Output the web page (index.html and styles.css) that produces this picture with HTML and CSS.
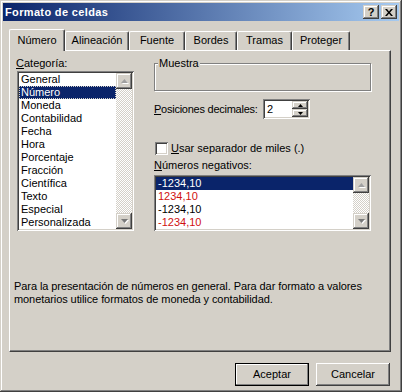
FILE: index.html
```html
<!DOCTYPE html>
<html lang="es">
<head>
    <meta charset="UTF-8">
    <meta name="viewport" content="width=device-width, initial-scale=1.0">
    <title>Formato de celdas</title>
    <link rel="stylesheet" href="styles.css">
</head>
<body>

<div class="window">
    <div class="titlebar">
        <span class="title">Formato de celdas</span>
        <div class="caption-buttons">
            <span class="cap-btn">?</span>
            <span class="cap-btn">
                <svg width="8" height="7" viewBox="0 0 8 7"><path d="M0 0h2l2 2.4L6 0h2L5 3.5 8 7H6L4 4.6 2 7H0l3-3.5z"/></svg>
            </span>
        </div>
    </div>

    <div class="dialog">
        <div class="tabs">
            <div class="tab tab-active tab-numero">Número</div>
            <div class="tab tab-alineacion">Alineación</div>
            <div class="tab tab-fuente">Fuente</div>
            <div class="tab tab-bordes">Bordes</div>
            <div class="tab tab-tramas">Tramas</div>
            <div class="tab tab-proteger">Proteger</div>
        </div>

        <div class="panel">
            <div class="panel-grid">
                <div class="col-left">
                    <div class="label"><u>C</u>ategoría:</div>
                    <div class="listbox list-cat">
                        <div class="items">
                            <div class="item">General</div>
                            <div class="item item-selected item-focus">Número</div>
                            <div class="item">Moneda</div>
                            <div class="item">Contabilidad</div>
                            <div class="item">Fecha</div>
                            <div class="item">Hora</div>
                            <div class="item">Porcentaje</div>
                            <div class="item">Fracción</div>
                            <div class="item">Científica</div>
                            <div class="item">Texto</div>
                            <div class="item">Especial</div>
                            <div class="item">Personalizada</div>
                        </div>
                        <div class="scrollbar">
                            <div class="scroll-btn arrow-up">
                                <svg width="7" height="4" viewBox="0 0 7 4"><path d="M3.5 0L7 4H0z"/></svg>
                            </div>
                            <div class="scroll-track"></div>
                            <div class="scroll-btn arrow-down">
                                <svg width="7" height="4" viewBox="0 0 7 4"><path d="M0 0h7L3.5 4z"/></svg>
                            </div>
                        </div>
                    </div>
                </div>

                <div class="col-right">
                    <div class="group">
                        <div class="group-label">Muestra</div>
                    </div>

                    <div class="decimals-row">
                        <span class="label decimals-label"><u>P</u>osiciones decimales:</span>
                        <div class="spin">
                            <span class="spin-value">2</span>
                            <div class="spin-buttons">
                                <div class="spin-btn">
                                    <svg width="5" height="3" viewBox="0 0 5 3"><path d="M2.5 0L5 3H0z"/></svg>
                                </div>
                                <div class="spin-btn">
                                    <svg width="5" height="3" viewBox="0 0 5 3"><path d="M0 0h5L2.5 3z"/></svg>
                                </div>
                            </div>
                        </div>
                    </div>

                    <div class="check-row">
                        <span class="checkbox"></span>
                        <span class="label"><u>U</u>sar separador de miles (.)</span>
                    </div>

                    <div class="label neg-label"><u>N</u>úmeros negativos:</div>
                    <div class="listbox list-neg">
                        <div class="items">
                            <div class="item item-selected">-1234,10</div>
                            <div class="item item-red">1234,10</div>
                            <div class="item">-1234,10</div>
                            <div class="item item-red">-1234,10</div>
                        </div>
                        <div class="scrollbar">
                            <div class="scroll-btn arrow-up">
                                <svg width="7" height="4" viewBox="0 0 7 4"><path d="M3.5 0L7 4H0z"/></svg>
                            </div>
                            <div class="scroll-track"></div>
                            <div class="scroll-btn arrow-down">
                                <svg width="7" height="4" viewBox="0 0 7 4"><path d="M0 0h7L3.5 4z"/></svg>
                            </div>
                        </div>
                    </div>
                </div>
            </div>

            <p class="desc">Para la presentación de números en general. Para dar formato a valores monetarios utilice formatos de moneda y contabilidad.</p>
        </div>

        <div class="footer">
            <div class="btn btn-default">Aceptar</div>
            <div class="btn">Cancelar</div>
        </div>
    </div>
</div>

</body>
</html>
```

FILE: styles.css
```css
body {
    margin: 0;
    background: #d4d0c8;
    font-family: "Liberation Sans", Arial, sans-serif;
    font-size: 11px;
    line-height: 13px;
    color: #000;
}
.window {
    width: 402px;
    height: 392px;
    box-sizing: border-box;
    padding: 3px;
    background: #d4d0c8;
    box-shadow: inset -1px -1px #404040, inset 1px 1px #d4d0c8, inset -2px -2px #808080, inset 2px 2px #fff;
    display: flex;
    flex-direction: column;
}

/* title bar */
.titlebar {
    height: 18px;
    display: flex;
    align-items: center;
    justify-content: space-between;
    padding: 0 2px 0 2px;
    background: linear-gradient(to right, #0a246a, #a6caf0);
}
.title {
    color: #fff;
    font-weight: bold;
    letter-spacing: 0.35px;
}
.caption-buttons {
    display: flex;
    gap: 2px;
}
.cap-btn {
    width: 16px;
    height: 14px;
    box-sizing: border-box;
    display: flex;
    align-items: center;
    justify-content: center;
    background: #d4d0c8;
    box-shadow: inset -1px -1px #404040, inset 1px 1px #d4d0c8, inset -2px -2px #808080, inset 2px 2px #fff;
    font-weight: bold;
    font-size: 11px;
}

/* dialog body */
.dialog {
    flex: 1;
    display: flex;
    flex-direction: column;
    padding: 8px 8px 0 6px;
}
.tabs {
    display: flex;
    align-items: flex-end;
    height: 21px;
}
.tab {
    height: 19px;
    box-sizing: border-box;
    padding-top: 2px;
    text-align: center;
    border: 1px solid;
    border-color: #fff #404040 transparent #fff;
    border-bottom: 0;
    border-radius: 2px 2px 0 0;
    box-shadow: inset -1px 0 #808080;
}
.tab-active {
    position: relative;
    z-index: 1;
    height: 22px;
    margin-bottom: -1px;
    padding-top: 4px;
    background: #d4d0c8;
}
.tab-numero { width: 56px; }
.tab-alineacion { width: 64px; }
.tab-fuente { width: 56px; }
.tab-bordes { width: 52px; }
.tab-tramas { width: 55px; }
.tab-proteger { width: 58px; }

.panel {
    height: 302px;
    box-sizing: border-box;
    border: 1px solid;
    border-color: #fff #404040 #404040 #fff;
    box-shadow: inset -1px -1px #808080;
}
.panel-grid {
    display: grid;
    grid-template-columns: 118px 217px;
    column-gap: 20px;
    padding: 6px 0 0 6px;
}
.label u {
    text-decoration-thickness: 1px;
}

/* list boxes */
.listbox {
    display: flex;
    box-sizing: border-box;
    padding: 2px;
    background: #fff;
    box-shadow: inset 1px 1px #808080, inset -1px -1px #fff, inset 2px 2px #404040, inset -2px -2px #d4d0c8;
}
.list-cat {
    height: 160px;
    margin: 1px 0 0 1px;
}
.list-neg {
    height: 56px;
    margin-top: 3px;
}
.items {
    flex: 1;
}
.item {
    height: 13px;
    padding-left: 2px;
    white-space: nowrap;
}
.item-selected {
    background: #0a246a;
    color: #fff;
}
.item-focus {
    outline: 1px dotted #d4d0c8;
    outline-offset: -1px;
}
.item-red {
    color: #d01010;
}
.scrollbar {
    width: 16px;
    display: flex;
    flex-direction: column;
}
.scroll-track {
    flex: 1;
    background: repeating-conic-gradient(#fff 0 25%, #d4d0c8 0 50%) 0 0 / 2px 2px;
}
.scroll-btn {
    height: 16px;
    display: flex;
    align-items: center;
    justify-content: center;
    background: #d4d0c8;
    box-shadow: inset -1px -1px #404040, inset 1px 1px #d4d0c8, inset -2px -2px #808080, inset 2px 2px #fff;
}
.scroll-btn svg {
    filter: drop-shadow(1px 1px 0 #fff);
}
.arrow-up svg { fill: #a0a0a0; }
.arrow-down svg { fill: #787878; }

/* right column */
.group {
    height: 28px;
    box-sizing: border-box;
    margin-top: 6px;
    border: 1px solid #808080;
    box-shadow: 1px 1px 0 #fff, inset 1px 1px 0 #fff;
}
.group-label {
    width: fit-content;
    margin: -7px 0 0 3px;
    padding: 0 1px;
    background: #d4d0c8;
}
.decimals-row {
    display: flex;
    align-items: center;
    height: 20px;
    margin-top: 8px;
}
.decimals-label {
    width: 109px;
    letter-spacing: -0.25px;
}
.spin {
    width: 47px;
    height: 20px;
    box-sizing: border-box;
    padding: 2px;
    display: flex;
    background: #fff;
    box-shadow: inset 1px 1px #808080, inset -1px -1px #fff, inset 2px 2px #404040, inset -2px -2px #d4d0c8;
}
.spin-value {
    flex: 1;
    padding: 2px 0 0 2px;
}
.spin-buttons {
    width: 16px;
    display: flex;
    flex-direction: column;
}
.spin-btn {
    height: 8px;
    display: flex;
    align-items: center;
    justify-content: center;
    background: #d4d0c8;
    box-shadow: inset -1px -1px #404040, inset 1px 1px #d4d0c8, inset -2px -2px #808080, inset 2px 2px #fff;
}
.check-row {
    display: flex;
    align-items: center;
    gap: 3px;
    margin-top: 23px;
    padding-left: 1px;
}
.checkbox {
    width: 13px;
    height: 13px;
    background: #fff;
    box-shadow: inset 1px 1px #808080, inset -1px -1px #fff, inset 2px 2px #404040, inset -2px -2px #d4d0c8;
}
.neg-label {
    margin-top: 4px;
}

.desc {
    width: 362px;
    margin: 49px 0 0 4px;
    letter-spacing: -0.08px;
}

/* buttons */
.footer {
    display: flex;
    justify-content: flex-end;
    gap: 7px;
    margin-top: 11px;
    padding-right: 1px;
}
.btn {
    width: 74px;
    height: 23px;
    box-sizing: border-box;
    display: flex;
    align-items: center;
    justify-content: center;
    background: #d4d0c8;
    box-shadow: inset -1px -1px #404040, inset 1px 1px #fff, inset -2px -2px #808080, inset 2px 2px #d4d0c8;
}
.btn-default {
    border: 1px solid #000;
    box-shadow: inset -1px -1px #808080, inset 1px 1px #fff;
}
```
